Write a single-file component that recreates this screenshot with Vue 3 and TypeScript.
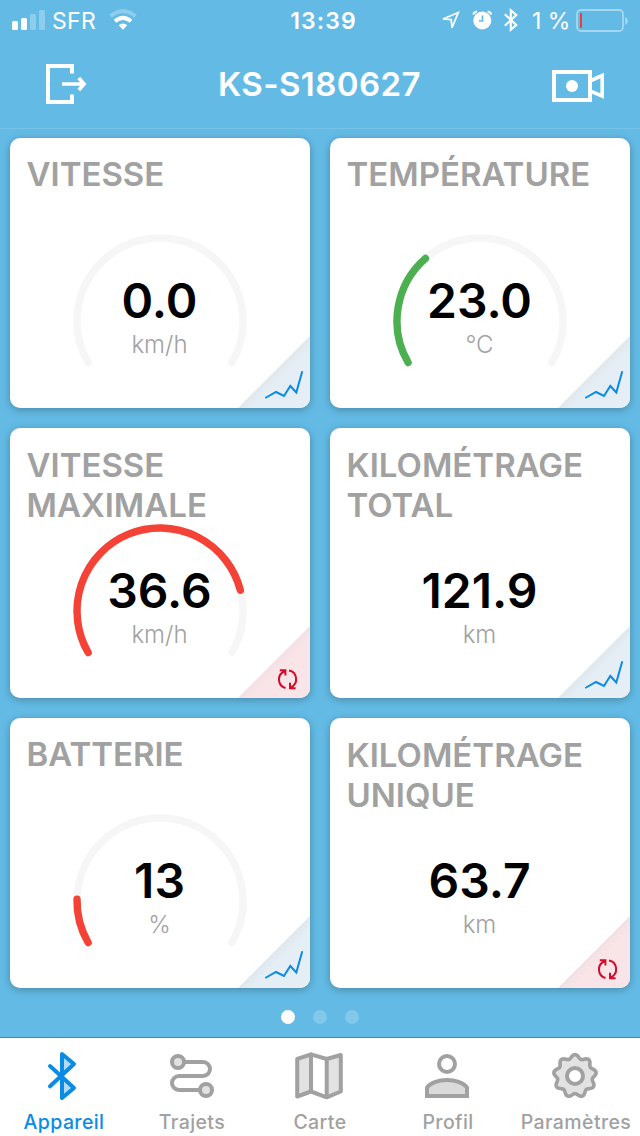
<script setup lang="ts">
type CornerKind = 'chart' | 'reset'

interface Metric {
  title: string[]
  value: string
  unit: string
  corner: CornerKind
  ratio?: number
  color?: string
}

const metrics: Metric[] = [
  { title: ['VITESSE'], value: '0.0', unit: 'km/h', corner: 'chart', ratio: 0 },
  { title: ['TEMPÉRATURE'], value: '23.0', unit: '°C', corner: 'chart', ratio: 0.3286, color: '#4caf50' },
  { title: ['VITESSE', 'MAXIMALE'], value: '36.6', unit: 'km/h', corner: 'reset', ratio: 0.8145, color: '#f44336' },
  { title: ['KILOMÉTRAGE', 'TOTAL'], value: '121.9', unit: 'km', corner: 'chart' },
  { title: ['BATTERIE'], value: '13', unit: '%', corner: 'chart', ratio: 0.13, color: '#f44336' },
  { title: ['KILOMÉTRAGE', 'UNIQUE'], value: '63.7', unit: 'km', corner: 'reset' },
]

const tabs = [
  { id: 'device', label: 'Appareil' },
  { id: 'trips', label: 'Trajets' },
  { id: 'map', label: 'Carte' },
  { id: 'profile', label: 'Profil' },
  { id: 'settings', label: 'Paramètres' },
]

// The dial covers 240 degrees, starting 30 degrees below the left horizontal.
function arc(ratio: number): string {
  const at = (deg: number) => {
    const a = (deg * Math.PI) / 180
    return `${(90 + 83 * Math.cos(a)).toFixed(2)} ${(90 + 83 * Math.sin(a)).toFixed(2)}`
  }
  const sweep = 240 * ratio
  return `M${at(150)} A83 83 0 ${sweep > 180 ? 1 : 0} 1 ${at(150 + sweep)}`
}

// Nine-tooth cog outline.
const cog =
  'M' +
  Array.from({ length: 180 }, (_, i) => {
    const t = (i * 2 * Math.PI) / 180
    const r = 19.5 + 1.9 * Math.cos(9 * t)
    return `${(23 + r * Math.sin(t)).toFixed(2)} ${(24 - r * Math.cos(t)).toFixed(2)}`
  }).join('L') +
  'Z'
</script>

<template>
  <div class="screen">
    <div class="status">
      <div class="carrier">
        <svg width="34" height="22" viewBox="0 0 34 22" fill="#fff">
          <rect x="0" y="12" width="6" height="9" rx="1.5" />
          <rect x="9" y="9" width="6" height="12" rx="1.5" />
          <rect x="18" y="5" width="6" height="16" rx="1.5" opacity=".28" />
          <rect x="27" y="1" width="6" height="20" rx="1.5" opacity=".28" />
        </svg>
        <span class="operator">SFR</span>
        <svg class="wifi" width="28" height="21" viewBox="0 0 28 21" fill="none" stroke="#fff">
          <path d="M1.5 7.200 Q14 -2.600 26.5 7.200" stroke-width="4" opacity=".28" />
          <path d="M6 12.200 Q14 5.600 22 12.200" stroke-width="4" />
          <path d="M9.7 16.200 Q14 12.600 18.3 16.200 L14 20.800 Z" fill="#fff" stroke="none" />
        </svg>
      </div>
      <span class="clock">13:39</span>
      <div class="indicators">
        <svg width="80" height="24" viewBox="0 0 80 24" fill="none" stroke="#fff">
          <path d="M18.300 3.500 L3 10 L11.200 10.600 L12 18.600 Z" stroke-width="1.700" />
          <circle cx="42.300" cy="11.500" r="9" fill="#fff" stroke="none" />
          <path d="M33.300 5.600 Q34 2.800 37 2.500 M51.300 5.600 Q50.600 2.800 47.600 2.500" stroke-width="2.100" />
          <path d="M42.500 6.500 V12 H38.800" stroke="#63bbe5" stroke-width="1.700" />
          <path d="M64.800 5.200 L76.300 16 L70.800 20.800 V1.200 L76.300 6 L64.800 16.800" stroke-width="2.100" />
        </svg>
        <span class="percent">1 %</span>
        <svg class="battery" width="53" height="24" viewBox="0 0 53 24">
          <rect x="1" y="1" width="46" height="21" rx="4" fill="none" stroke="#fff" stroke-opacity=".42" stroke-width="1.8" />
          <path d="M49.2 8 Q52 9 52 11.8 Q52 14.600 49.2 16 Z" fill="#fff" opacity=".42" />
          <path d="M6 4 V19 H5 Q4 19 4 18 V5 Q4 4 5 4 Z" fill="#f43d35" />
        </svg>
      </div>
    </div>

    <header class="bar">
      <svg width="44" height="44" viewBox="44 62 44 44" fill="none" stroke="#fff" stroke-width="4">
        <path d="M72 73.500 V66 H48 V102 H72 V94.500" />
        <path d="M62 84 H84 M78.800 78 L84 84 L78.800 90" stroke-width="3.700" />
      </svg>
      <h1>KS-S180627</h1>
      <svg class="camera" width="54" height="36" viewBox="551 68 54 36" fill="none" stroke="#fff">
        <rect x="554" y="72" width="36" height="28" stroke-width="4" />
        <circle cx="572" cy="86" r="6" fill="#fff" stroke="none" />
        <path d="M591 80.500 L602.200 75.500 V96 L591 91.300" stroke-width="3.600" />
      </svg>
    </header>

    <main class="grid">
      <section v-for="m in metrics" :key="m.title.join(' ')" class="card">
        <h2 :class="{ two: m.title.length > 1 }">
          <span v-for="line in m.title" :key="line">{{ line }}</span>
        </h2>
        <svg v-if="m.ratio !== undefined" class="dial" width="180" height="140" viewBox="0 0 180 140" fill="none" stroke-width="7.400" stroke-linecap="round">
          <path :d="arc(1)" stroke="#f6f6f6" />
          <path v-if="m.ratio > 0" :d="arc(m.ratio)" :stroke="m.color" />
        </svg>
        <div class="reading">
          <span class="value">{{ m.value }}</span>
          <span class="unit">{{ m.unit }}</span>
        </div>
        <svg class="corner" width="72" height="72" viewBox="0 0 72 72" fill="none">
          <defs>
            <linearGradient :id="'fold-' + m.value" gradientUnits="userSpaceOnUse" x1="36" y1="36" x2="42" y2="42">
              <stop offset="0" :stop-color="m.corner === 'chart' ? '#e0e8ef' : '#f3e0e4'" />
              <stop offset="1" :stop-color="m.corner === 'chart' ? '#e5edf5' : '#f9e5e8'" />
            </linearGradient>
          </defs>
          <path d="M72 0 V72 H0 Z" :fill="`url(#fold-${m.value})`" />
          <path v-if="m.corner === 'chart'" d="M27.300 62 L38 56 L46 60 L52.300 50 L58.300 56.500 L64.300 35.300" stroke="#0a8ce4" stroke-width="2" />
          <g v-else stroke="#d80a2c" stroke-width="2">
            <path d="M47.500 62 A8.800 8.800 0 0 1 46.800 45.200 M41.800 44.300 H47.400 V49.600" />
            <path d="M51 44.500 A8.800 8.800 0 0 1 52.600 61.300 M57.600 62.200 H52 V56.800" />
          </g>
        </svg>
      </section>
    </main>

    <div class="pager"><i class="on"></i><i></i><i></i></div>

    <nav class="tabs">
      <a v-for="(t, i) in tabs" :key="t.id" :class="['tab', t.id, { active: i === 0 }]">
        <svg width="48" height="48" viewBox="0 0 48 48" fill="none" stroke="currentColor" stroke-width="4">
          <g v-if="t.id === 'device'" stroke-linecap="round" stroke-linejoin="round">
            <path d="M22 2.500 L34 12.300 L22 24 L34 35.700 L22 45.500 Z" fill="#b3dbf6" stroke="none" />
            <path d="M10 14 L34 36 L22 46 V2 L34 12 L10 34.300" />
          </g>
          <template v-else-if="t.id === 'trips'">
            <path d="M16 10 H35 A7 7 0 0 1 35 24 H11 A7 7 0 0 0 11 38 H32" />
            <circle cx="10" cy="10" r="6" fill="#e2e2e2" />
            <circle cx="38" cy="38" r="6" fill="#e2e2e2" />
          </template>
          <g v-else-if="t.id === 'map'" stroke-linejoin="round">
            <path d="M1.200 7 L15 2.300 V39.500 L1.200 44.500 Z M30.700 7 L44.800 3 V39.500 L30.700 45.300 Z" fill="#e2e2e2" />
            <path d="M15 2.300 L30.700 7 M15 39.500 L30.700 45.300" />
          </g>
          <template v-else-if="t.id === 'profile'">
            <circle cx="23" cy="12" r="8" />
            <path d="M3 44 V35.500 C6 31 14 28 23 28 S40 31 43 35.500 V44 Z" fill="#dadada" />
          </template>
          <template v-else>
            <path :d="cog" fill="#e2e2e2" stroke-width="3.600" />
            <circle cx="23" cy="24" r="8" fill="#fff" />
          </template>
        </svg>
        <span>{{ t.label }}</span>
      </a>
    </nav>
  </div>
</template>

<style>
body {
  margin: 0;
  background: #63bbe5;
}
</style>

<style scoped>
.screen {
  display: flex;
  flex-direction: column;
  width: 640px;
  height: 1136px;
  overflow: hidden;
  background: #63bbe5;
  color: #fff;
  font-family: Inter, "Liberation Sans", sans-serif;
}
svg {
  display: block;
  flex: none;
  overflow: visible;
}
.status {
  display: grid;
  grid-template-columns: 1fr auto 1fr;
  box-sizing: border-box;
  height: 40px;
  padding: 0 11px 0 12px;
  font-size: 23px;
  line-height: 42px;
}
.carrier,
.indicators {
  display: flex;
  align-items: flex-start;
}
.carrier svg {
  margin-top: 9px;
}
.operator {
  margin-left: 6px;
  width: 57px;
  letter-spacing: 0.3px;
}
.clock {
  position: relative;
  left: 3px;
  font-weight: 600;
  letter-spacing: 1.1px;
}
.indicators {
  justify-content: flex-end;
}
.indicators svg {
  margin-top: 9px;
}
.percent {
  margin-left: 12px;
  width: 44px;
  white-space: nowrap;
}
.bar {
  display: flex;
  align-items: center;
  justify-content: space-between;
  box-sizing: border-box;
  height: 89px;
  padding: 0 35px 1px 44px;
  border-bottom: 1px solid #76c3e8;
}
.camera {
  margin-top: 4px;
}
h1 {
  margin: 0;
  font-size: 33px;
  font-weight: 580;
  line-height: 40px;
  letter-spacing: 0.45px;
}
.grid {
  display: grid;
  grid-template-columns: 300px 300px;
  grid-auto-rows: 270px;
  gap: 20px;
  padding: 9px 10px 0;
}
.card {
  position: relative;
  overflow: hidden;
  border-radius: 10px;
  background: #fff;
  box-shadow: 0 2px 9px rgba(0, 0, 0, 0.27);
}
h2 {
  margin: 16px 0 0 16.5px;
  color: #a1a1a1;
  font-size: 33px;
  font-weight: 580;
  line-height: 40px;
}
h2.two {
  margin-top: 17px;
}
h2 span {
  display: block;
}
.dial {
  position: absolute;
  left: 60px;
  top: 93px;
}
.reading {
  position: absolute;
  left: 0;
  right: 1px;
  top: 134px;
  display: flex;
  flex-direction: column;
  align-items: center;
}
.value {
  color: #000;
  font-size: 48px;
  font-weight: 600;
  line-height: 58px;
}
.unit {
  color: #a1a1a1;
  font-size: 24px;
  font-weight: 300;
  line-height: 30px;
}
.corner {
  position: absolute;
  right: 0;
  bottom: 0;
}
.pager {
  display: flex;
  flex: 1;
  align-items: center;
  justify-content: center;
  gap: 18px;
  padding-top: 9px;
}
.pager i {
  width: 14px;
  height: 14px;
  border-radius: 50%;
  background: rgba(255, 255, 255, 0.2);
}
.pager i.on {
  background: #fff;
}
.tabs {
  display: grid;
  grid-template-columns: repeat(5, 128px);
  box-sizing: border-box;
  height: 99px;
  border-top: 1px solid #3e8cae;
  background: #fff;
}
.tab {
  display: flex;
  flex-direction: column;
  align-items: center;
  padding-top: 14px;
  color: #a1a1a1;
  font-size: 19.5px;
  font-weight: 480;
  letter-spacing: 0.4px;
  line-height: 24px;
}
.tab span {
  margin-top: 10px;
}
.tab.active {
  color: #0a8ce4;
}
</style>
